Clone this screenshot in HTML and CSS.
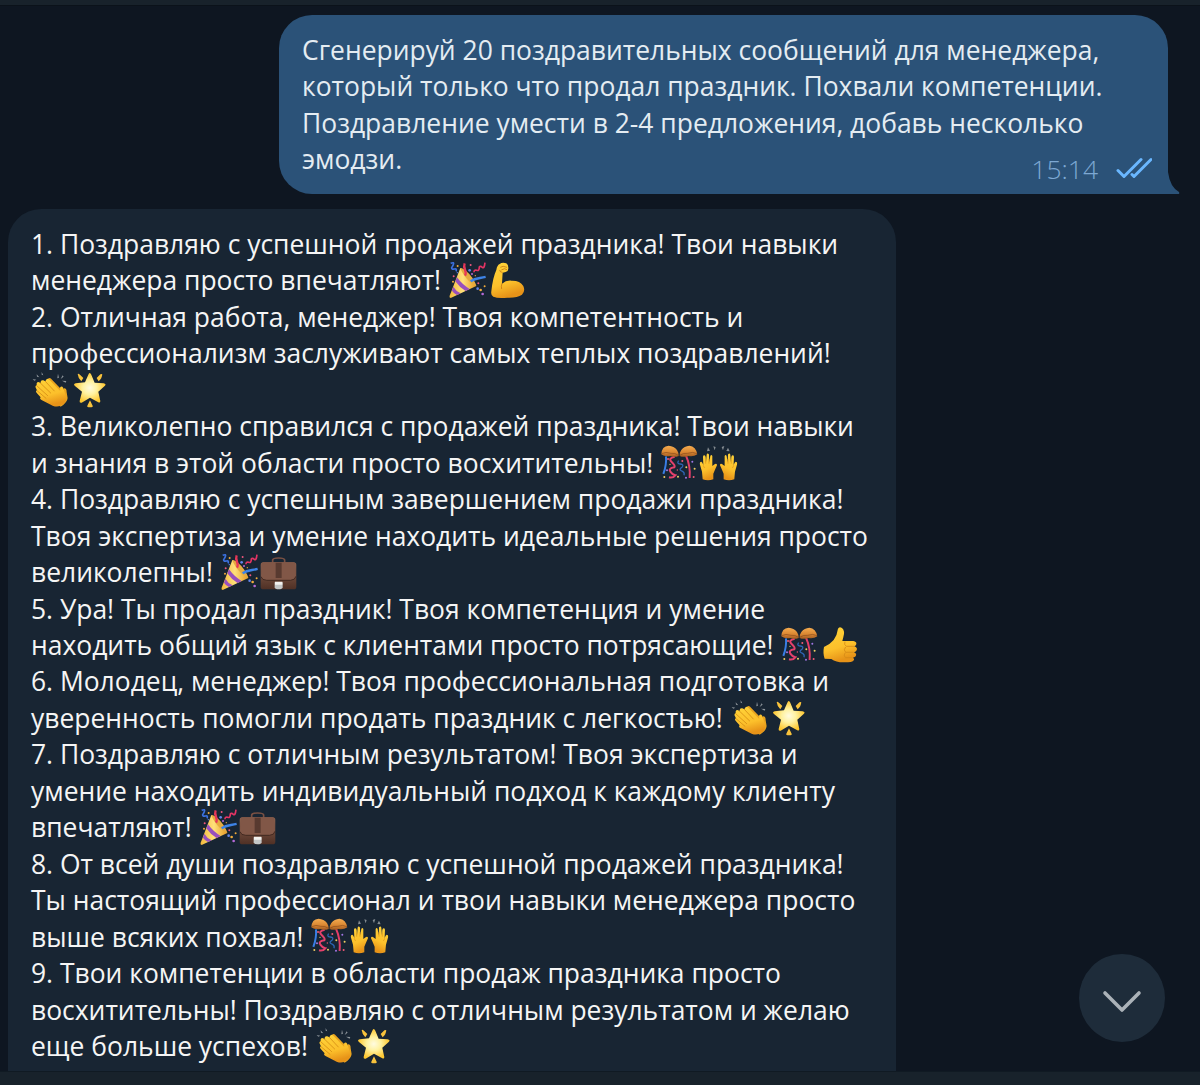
FILE: index.html
```html
<!DOCTYPE html>
<html lang="ru">
<head>
<meta charset="utf-8">
<title>Чат</title>
<link rel="stylesheet" href="styles.css">
</head>
<body>
<svg class="defs" aria-hidden="true">
  <defs>
    <linearGradient id="skin" x1="0" y1="0" x2="0.3" y2="1"><stop offset="0" stop-color="#ffd43a"/><stop offset="0.65" stop-color="#fcc02b"/><stop offset="1" stop-color="#e79318"/></linearGradient>
    <linearGradient id="cone"><stop offset="0" stop-color="#f3b93d"/><stop offset="0.5" stop-color="#ffe07a"/><stop offset="1" stop-color="#e79a25"/></linearGradient>
    <radialGradient id="glow"><stop offset="0" stop-color="#fffbe0"/><stop offset="0.45" stop-color="#fff2a0"/><stop offset="1" stop-color="#fdc62f"/></radialGradient>
    <linearGradient id="ball" x1="0" y1="0" x2="0" y2="1"><stop offset="0" stop-color="#f5ac50"/><stop offset="0.6" stop-color="#d98631"/><stop offset="1" stop-color="#a05a22"/></linearGradient>
    <linearGradient id="leather" x1="0" y1="0" x2="0" y2="1"><stop offset="0" stop-color="#8d6350"/><stop offset="1" stop-color="#4f3025"/></linearGradient>
  </defs>
  <symbol id="party" viewBox="23 14 118 118">
    <path d="M60 38C72 40 100 70 108 92L31 128Q26 127 28 121Z" fill="url(#cone)"/>
    <path d="M50 66Q66 88 88 101L76 107Q57 96 45 78ZM39 94Q47 108 61 114L50 119Q39 113 35 106Z" fill="#9850bd"/>
    <path d="M60 38C76 40 100 66 108 92C92 88 66 58 60 38Z" fill="#e5ab40"/>
    <path d="M74 61C83 48 66 41 73 24" stroke="#e63758" stroke-width="7" fill="none"/>
    <path d="M91 78C106 67 116 70 136 65" stroke="#3e83e5" stroke-width="7" fill="none"/>
    <path d="M31 24Q43 19 39 28T34 37Q33 43 42 41T47 48" stroke="#3b70df" stroke-width="5" fill="none"/>
    <path d="M101 51Q101 42 109 45T117 35Q120 31 126 36T134 22" stroke="#e33464" stroke-width="5" fill="none"/>
    <g fill="#f2ac3b"><circle cx="52" cy="32" r="3"/><circle cx="121" cy="104" r="4"/><circle cx="38" cy="79" r="3"/><circle cx="133" cy="93" r="3"/><circle cx="105" cy="61" r="2"/></g>
    <g fill="#ef577d"><circle cx="91" cy="29" r="3"/><circle cx="114" cy="84" r="3"/><circle cx="40" cy="63" r="3"/></g>
    <g fill="#6284e8"><circle cx="88" cy="45" r="4"/><circle cx="112" cy="100" r="4"/><circle cx="51" cy="52" r="2"/></g>
    <g fill="#b569d8"><circle cx="95" cy="56" r="3"/><circle cx="127" cy="116" r="4"/></g>
  </symbol>
  <symbol id="muscle" viewBox="143 14 118 118">
    <path d="M181 26Q189 20 201 24Q208 28 207 40Q207 48 199 50L190 52L188 85Q200 75 216 76Q242 75 252 92Q259 107 248 118Q234 128 204 127Q177 131 162 124Q154 121 156 108Q160 68 171 44Q173 30 181 26Z" fill="url(#skin)"/>
    <path d="M183 36Q190 30 203 36M186 44Q196 37 203 43M190 51Q182 52 181 44M188 84Q185 93 187 101" stroke="#c77a15" stroke-width="2.5" fill="none"/>
  </symbol>
  <symbol id="clap" viewBox="33 14 118 118">
    <g fill="#8d949a"><path d="M38 41l11 2-6 3zM50 27l8 9-7-2zM65 20l5 10-5-2zM114 25l3 12-5 2zM128 30l3 4-9 7zM126 46l13 1-2 5z"/></g>
    <path d="M84 40Q89 35 94 41L128 76L132 69Q140 68 140 80L143 98Q142 112 122 124L80 80L75 54Z" fill="#e9a41f"/>
    <path d="M50 54Q53 47 60 52L62 54Q61 43 70 45L76 48Q80 36 88 43L121 77L120 67Q125 60 130 68L138 93Q142 107 130 117Q115 128 98 121L66 105Q57 101 62 96L51 84Q45 78 51 75L48 69Q44 62 50 60Z" fill="url(#skin)"/>
    <path d="M60 52L92 83M50 61L83 91M51 76L78 99M76 48L103 77" stroke="#d58d15" stroke-width="2.5" fill="none" stroke-linecap="round"/>
  </symbol>
  <symbol id="star" viewBox="150 14 118 118">
    <path d="M209 23Q212 23 214 28L224 52L251 54Q260 56 255 61L235 79L241 107Q241 114 235 111L210 97L185 112Q178 114 179 107L186 79L164 61Q159 56 167 54L195 51L205 28Q207 23 209 23Z" fill="url(#glow)"/>
    <path d="M173 26Q175 24 180 28L190 38L184 48Q174 38 173 26ZM247 27Q243 24 239 29L230 38L236 48Q246 40 247 27ZM210 105L218 121Q220 126 210 126T202 121Z" fill="#f8c23b"/>
  </symbol>
  <symbol id="confetti" viewBox="33 14 118 118">
    <path d="M51 54Q53 80 43 107" stroke="#397ee4" stroke-width="6" fill="none"/>
    <path d="M111 52Q125 83 122 119" stroke="#e13d68" stroke-width="6" fill="none"/>
    <path d="M77 55Q56 60 68 71T76 87Q57 90 64 100T79 111Q72 120 60 117" stroke="#e3416c" stroke-width="6" fill="none"/>
    <path d="M89 67Q82 76 94 77T99 87Q88 94 98 98T105 111" stroke="#2d65b4" stroke-width="4" fill="none"/>
    <g fill="#ef5b77"><circle cx="57" cy="62" r="3"/><circle cx="100" cy="68" r="3"/><circle cx="85" cy="95" r="2"/><circle cx="134" cy="116" r="3"/></g>
    <g fill="#f0ce63"><circle cx="46" cy="116" r="3"/><circle cx="112" cy="87" r="3"/><circle cx="137" cy="91" r="3"/><circle cx="87" cy="115" r="3"/><circle cx="63" cy="78" r="2"/></g>
    <g fill="#a075e4"><circle cx="130" cy="70" r="3"/><circle cx="111" cy="118" r="3"/><circle cx="54" cy="96" r="3"/></g>
    <path d="M37 48Q38 23 59 22Q75 23 84 35Q90 44 89 53Q76 58 64 53Q47 56 37 48ZM92 53Q91 43 97 35Q106 23 121 22Q141 24 145 48Q134 56 119 53Q104 58 92 53Z" fill="url(#ball)"/>
    <path d="M38 46Q50 39 66 45Q78 43 88 51M93 51Q103 43 116 45Q132 39 144 46" stroke="#8a4c1d" stroke-width="2" fill="none"/>
  </symbol>
  <symbol id="hands" viewBox="150 14 118 118">
    <path d="M177 27l6 10-9 2zM193 24l7 2-3 10zM218 26l8-3-4 13zM237 28l5 11-10-1z" fill="#858c92"/>
    <g id="palm"><path d="M159 100L153 79Q151 70 157 70Q160 71 163 80L162 56Q162 50 166 51Q169 51 170 56L171 72L173 49Q174 44 178 46Q181 47 180 52L181 72L184 53Q187 47 190 53L190 83L198 77Q205 75 204 81L198 94L193 106L193 123Q177 129 161 123Z" fill="url(#skin)"/>
    <path d="M170 64v12M180 62v14M163 81q1 5 4 8" stroke="#d98f18" stroke-width="2" fill="none"/></g>
    <use href="#palm" transform="translate(417 0) scale(-1 1)"/>
  </symbol>
  <symbol id="briefcase" viewBox="148 14 118 118">
    <path d="M189 47V38Q190 32 207 32T225 38V47" stroke="#795043" stroke-width="5" fill="none"/>
    <rect x="153" y="45" width="107" height="81" rx="8" fill="url(#leather)"/>
    <path d="M156 49Q157 45 162 45H251Q257 45 257 50L259 86Q258 98 244 99H169Q154 98 154 86Z" fill="#815747"/>
    <path d="M154 88Q157 99 171 99H243Q257 98 259 87" stroke="#402820" stroke-width="3" fill="none"/>
    <path d="M198 46H216V92H198Z" fill="#583a30"/>
    <path d="M195 105H219V120Q218 126 207 126T195 120Z" fill="#c4c7c7"/><path d="M196 103h22v9h-22z" fill="#f2f2ef"/>
  </symbol>
  <symbol id="thumb" viewBox="150 14 118 118">
    <path d="M162 80Q178 74 191 59Q202 43 204 25Q208 17 216 23Q226 31 220 51L217 62H250Q261 64 259 72Q258 77 253 78Q264 82 260 90Q258 95 252 96Q262 100 257 108Q255 111 249 112Q255 116 250 121Q246 126 225 126Q199 127 184 116L164 115Q158 99 162 80Z" fill="url(#skin)"/>
    <path d="M253 78H229Q221 73 225 64M251 96H227Q219 89 227 80M248 112H226Q219 104 226 97" stroke="#d58a17" stroke-width="2.5" fill="none"/>
  </symbol>
</svg>
<main class="chat">
  <header class="edge-top"></header>
  <section class="messages">
    <article class="bubble sent">
      <p>Сгенерируй 20 поздравительных сообщений для менеджера,<br>который только что продал праздник. Похвали компетенции.<br>Поздравление умести в 2-4 предложения, добавь несколько<br>эмодзи.</p>
      <div class="meta"><time>15:14</time><svg class="ticks" viewBox="0 0 36 22"><path d="M2 13.500L8 19.500L25 2.500M16 17.500L18 19.500L35 2.500"/></svg></div>
      <svg class="tail" viewBox="0 0 14 32"><path d="M0 0V10Q2 25 11 30Q12 32 10 32H0Z"/></svg>
    </article>
    <article class="bubble received">
      <p>1. Поздравляю с успешной продажей праздника! Твои навыки<br>менеджера просто впечатляют! <svg class="emoji"><use href="#party"/></svg><svg class="emoji"><use href="#muscle"/></svg><br>2. Отличная работа, менеджер! Твоя компетентность и<br>профессионализм заслуживают самых теплых поздравлений!<br><svg class="emoji"><use href="#clap"/></svg><svg class="emoji"><use href="#star"/></svg><br>3. Великолепно справился с продажей праздника! Твои навыки<br>и знания в этой области просто восхитительны! <svg class="emoji"><use href="#confetti"/></svg><svg class="emoji"><use href="#hands"/></svg><br>4. Поздравляю с успешным завершением продажи праздника!<br>Твоя экспертиза и умение находить идеальные решения просто<br>великолепны! <svg class="emoji"><use href="#party"/></svg><svg class="emoji"><use href="#briefcase"/></svg><br>5. Ура! Ты продал праздник! Твоя компетенция и умение<br>находить общий язык с клиентами просто потрясающие! <svg class="emoji"><use href="#confetti"/></svg><svg class="emoji"><use href="#thumb"/></svg><br>6. Молодец, менеджер! Твоя профессиональная подготовка и<br>уверенность помогли продать праздник с легкостью! <svg class="emoji"><use href="#clap"/></svg><svg class="emoji"><use href="#star"/></svg><br>7. Поздравляю с отличным результатом! Твоя экспертиза и<br>умение находить индивидуальный подход к каждому клиенту<br>впечатляют! <svg class="emoji"><use href="#party"/></svg><svg class="emoji"><use href="#briefcase"/></svg><br>8. От всей души поздравляю с успешной продажей праздника!<br>Ты настоящий профессионал и твои навыки менеджера просто<br>выше всяких похвал! <svg class="emoji"><use href="#confetti"/></svg><svg class="emoji"><use href="#hands"/></svg><br>9. Твои компетенции в области продаж праздника просто<br>восхитительны! Поздравляю с отличным результатом и желаю<br>еще больше успехов! <svg class="emoji"><use href="#clap"/></svg><svg class="emoji"><use href="#star"/></svg></p>
    </article>
  </section>
  <footer class="edge-bottom"></footer>
  <button class="scroll-down" aria-label="Вниз"><svg viewBox="0 0 40 24"><path d="M3 3L20 20L37 3"/></svg></button>
</main>
</body>
</html>
```
FILE: styles.css
```css
* { box-sizing: border-box; }
body { margin: 0; background: #0e1621; font-family: "Open Sans", "Noto Sans", sans-serif; }
.defs { position: absolute; width: 0; height: 0; }
.chat { position: relative; display: flex; flex-direction: column; width: 1200px; height: 1085px; overflow: hidden; }
.edge-top { flex: none; height: 6px; background: #18222b; border-bottom: 1px solid #0b121a; }
.messages { flex: 1; min-height: 0; display: flex; flex-direction: column; gap: 15px; padding: 9px 0 0 8px; overflow: hidden; }
.edge-bottom { flex: none; height: 14px; background: #18222b; border-top: 1px solid #101a23; }
.bubble { position: relative; flex: none; white-space: nowrap; font-size: 26.45px; line-height: 36.45px; color: #f5f5f5; }
.bubble p { margin: 0; }
.sent { align-self: flex-end; width: 889px; height: 179px; margin-right: 32px; padding: 17px 23px; background: #2b5278; border-radius: 33px 33px 0 33px; color: #e4ecf2; }
.received { width: 888px; height: 900px; padding: 17px 23px; background: #182533; border-radius: 33px 33px 0 0; }
.meta { position: absolute; right: 16px; bottom: 7px; display: flex; align-items: center; gap: 18px; color: #7da8d3; font-size: 26.45px; font-weight: 360; }
.ticks { width: 36px; height: 22px; margin-bottom: 1px; fill: none; stroke: #6ab7ff; stroke-width: 3; stroke-linecap: round; stroke-linejoin: round; }
.tail { position: absolute; left: 100%; bottom: 0; width: 14px; height: 32px; fill: #2b5278; }
.emoji { width: 39.3px; height: 39.3px; margin: -10px 0; vertical-align: 0.9px; }
.scroll-down { position: absolute; right: 35px; bottom: 43px; display: grid; place-items: center; width: 86px; height: 88px; padding: 7px 0 0; border: 0; border-radius: 50%; background: #1e2c3a; }
.scroll-down svg { width: 40px; height: 24px; fill: none; stroke: #abb2b8; stroke-width: 3.6; stroke-linecap: round; stroke-linejoin: round; }
```
